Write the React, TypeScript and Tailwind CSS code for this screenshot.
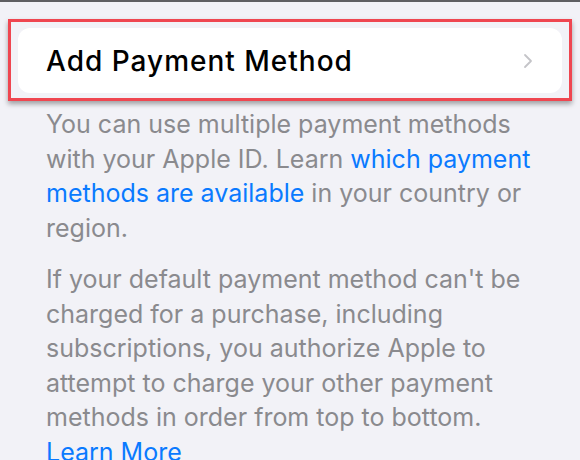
import { ChevronRight } from 'lucide-react';

export default function App() {
  return (
    <div
      className="w-[580px] h-[460px] overflow-hidden bg-[#f2f2f7] border-t-2 border-[#5f5f62]"
      style={{ fontFamily: 'Inter, "Noto Sans", sans-serif' }}
    >
      {/* Highlighted row */}
      <div className="mt-[17px] ml-[8px] w-[564px] h-[82px] border-[3px] border-[#ef4650] shadow-[0_3px_5px_rgba(0,0,0,0.35)] px-[7px] pt-[6px] pb-[5px]">
        <div className="h-full bg-white rounded-[12px] flex items-center justify-between pl-[28px] pr-[22px]">
          <span className="text-[28px] font-medium text-black tracking-[1px]">Add Payment Method</span>
          <ChevronRight className="w-[24px] h-[24px] text-[#c4c4c8]" strokeWidth={1.8} />
        </div>
      </div>

      {/* Footer notes */}
      <div className="pl-[46px] w-[560px] pt-[6px] text-[25px] leading-[34.5px] text-[#8a8a8e] tracking-[0px]">
        <p className="whitespace-nowrap">
          You can use multiple payment methods
          <br />
          with your Apple ID. Learn <span className="text-[#0a7aff]">which payment</span>
          <br />
          <span className="text-[#0a7aff]">methods are available</span> in your country or
          <br />
          region.
        </p>
        <p className="mt-[17px] whitespace-nowrap">
          If your default payment method can't be
          <br />
          charged for a purchase, including
          <br />
          subscriptions, you authorize Apple to
          <br />
          attempt to charge your other payment
          <br />
          methods in order from top to bottom.
          <br />
          <span className="text-[#0a7aff]">Learn More</span>
        </p>
      </div>
    </div>
  );
}
